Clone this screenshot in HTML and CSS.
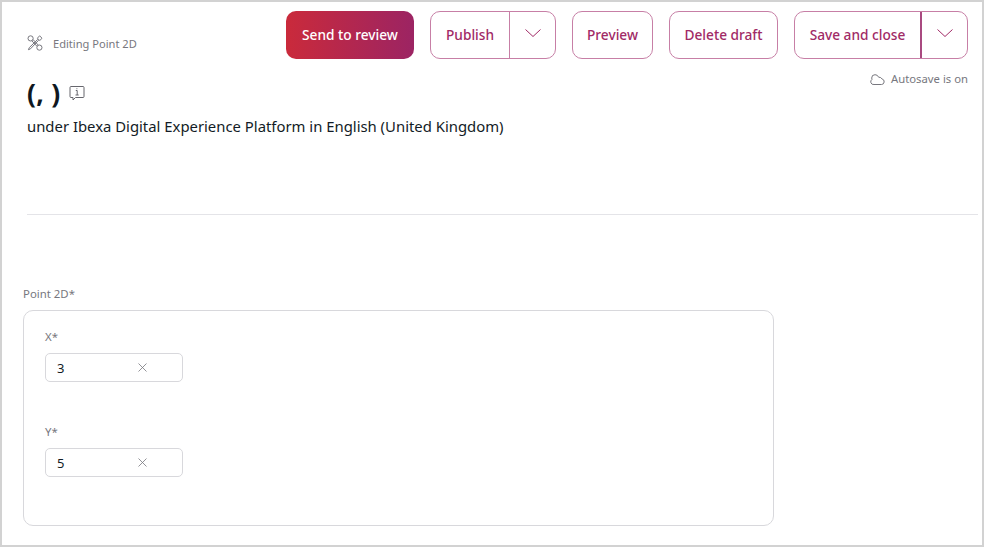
FILE: index.html
```html
<!DOCTYPE html>
<html lang="en">

<head>
    <meta charset="UTF-8">
    <title>Editing Point 2D</title>
    <link rel="stylesheet" href="styles.css">
</head>

<body>
<div class="frame">
    <div class="top-bar">
        <div class="editing">
            <svg class="tools-icon" viewBox="0 0 16 16" width="16" height="16" fill="none" stroke="#77777e" stroke-width="1">
                <circle cx="3.600" cy="3.400" r="2.600"/>
                <circle cx="12.400" cy="12.600" r="2.600"/>
                <path d="M6 4.500 11.200 10M4.800 5.800 10 11.300"/>
                <path d="M12.600 .8 15 3.200 12.800 5.600 10.400 3.200z"/>
                <path d="M10.800 4.300 2.400 12.500l-1 2.200 2 -.8L11.700 5.200"/>
            </svg>
            <span>Editing Point 2D</span>
        </div>
        <div class="actions">
            <button class="btn btn-primary">Send to review</button>
            <div class="btn-group publish">
                <button class="btn-main">Publish</button>
                <button class="btn-toggle">
                    <svg viewBox="0 0 16 8" width="16" height="8" fill="none" stroke="#a12a66" stroke-width="1"><path d="M.5.5 8 7.5 15.5.5"/></svg>
                </button>
            </div>
            <button class="btn btn-outline preview">Preview</button>
            <button class="btn btn-outline delete">Delete draft</button>
            <div class="btn-group save">
                <button class="btn-main">Save and close</button>
                <button class="btn-toggle strong">
                    <svg viewBox="0 0 16 8" width="16" height="8" fill="none" stroke="#a12a66" stroke-width="1"><path d="M.5.5 8 7.5 15.5.5"/></svg>
                </button>
            </div>
        </div>
    </div>

    <div class="autosave">
        <svg viewBox="0 0 15 11" width="15" height="11" fill="none" stroke="#77777e" stroke-width="1"><path d="M4 10.500h7.500a2.800 2.800 0 0 0 .6-5.500A3.600 3.600 0 0 0 8.600 3.200 3.800 3.800 0 0 0 5 .7a3.300 3.300 0 0 0-3.300 3.300c0 .5.100 1 .3 1.400A2.800 2.800 0 0 0 4 10.500z"/></svg>
        <span>Autosave is on</span>
    </div>

    <div class="title-block">
        <div class="title-row">
            <h1>(, )</h1>
            <svg class="info-icon" viewBox="0 0 16 16" width="16" height="16" fill="none" stroke="#66666d" stroke-width="1">
                <path d="M2 1.500h12a1 1 0 0 1 1 1v9a1 1 0 0 1-1 1H6.500L4 15v-2.500H2a1 1 0 0 1-1-1v-9a1 1 0 0 1 1-1z"/>
                <path d="M6.800 5.500h1.400V10M6.500 10h3.200M7.900 3.300v.9"/>
            </svg>
        </div>
        <p class="location">under Ibexa Digital Experience Platform in English (United Kingdom)</p>
    </div>

    <hr class="divider">

    <div class="field-label">Point 2D*</div>
    <div class="card">
        <div class="coord">
            <label>X*</label>
            <div class="input">
                <span>3</span>
                <svg viewBox="0 0 9 9" width="9" height="9" fill="none" stroke="#77777e" stroke-width="0.8"><path d="M.5.500l8 8M8.500.500l-8 8"/></svg>
            </div>
        </div>
        <div class="coord">
            <label>Y*</label>
            <div class="input">
                <span>5</span>
                <svg viewBox="0 0 9 9" width="9" height="9" fill="none" stroke="#77777e" stroke-width="0.8"><path d="M.5.500l8 8M8.500.500l-8 8"/></svg>
            </div>
        </div>
    </div>
</div>
</body>

</html>
```

FILE: styles.css
```css
* {
    box-sizing: border-box;
}

body {
    margin: 0;
    font-family: "Noto Sans", sans-serif;
    color: #131c26;
    background-color: #fff;
}

.frame {
    width: 984px;
    height: 547px;
    border: 2px solid #d2d2d2;
    overflow: hidden;
}

.top-bar {
    display: flex;
    justify-content: space-between;
    align-items: flex-start;
    padding: 9px 14px 0 25px;
}

.editing {
    display: flex;
    align-items: center;
    gap: 10px;
    margin-top: 24px;
    font-size: 11.1px;
    color: #77777e;
}

.actions {
    display: flex;
    gap: 16px;
}

button {
    font-family: inherit;
    font-size: 13.7px;
    font-weight: 500;
    cursor: pointer;
    background: none;
    border: none;
    color: #a12a66;
    padding: 0 0 2px;
}

.btn {
    height: 48px;
    border-radius: 10px;
}

.btn-primary {
    width: 128px;
    color: #fff;
    background-image: linear-gradient(90deg, #ca2a3b, #9c2463);
}

.btn-outline {
    border: 1px solid #c77fa6;
}

.preview {
    width: 81px;
}

.delete {
    width: 109px;
}

.btn-group {
    display: flex;
    height: 48px;
    border: 1px solid #c77fa6;
    border-radius: 10px;
}

.publish {
    width: 126px;
}

.save {
    width: 174px;
}

.btn-main {
    flex: 1;
}

.btn-toggle {
    width: 46px;
    display: flex;
    align-items: center;
    justify-content: center;
    border-left: 1px solid #c77fa6;
    padding-bottom: 4px;
}

.btn-toggle.strong {
    width: 47px;
    border-left: 2px solid #a94a80;
}

.autosave {
    display: flex;
    justify-content: flex-end;
    align-items: center;
    gap: 6px;
    padding-right: 14px;
    margin-top: 12px;
    font-size: 11.3px;
    line-height: 16px;
    color: #77777e;
}

.title-block {
    padding-left: 25px;
    margin-top: -10px;
}

.title-row {
    display: flex;
    align-items: center;
    gap: 9px;
}

h1 {
    margin: 0;
    font-size: 26.4px;
    line-height: 32px;
    font-weight: 700;
    letter-spacing: 0.3px;
    color: #0f1720;
}

.location {
    margin: 7px 0 0;
    font-size: 14.87px;
    line-height: 20px;
}

hr.divider {
    margin: 78px 4px 0 25px;
    border: none;
    border-top: 1px solid #e4e4e8;
}

.field-label {
    margin: 71px 0 0 21px;
    font-size: 11.4px;
    line-height: 16px;
    color: #77777e;
}

.card {
    width: 751px;
    height: 216px;
    margin: 8px 0 0 21px;
    padding: 18px 21px;
    border: 1px solid #d8d8dc;
    border-radius: 10px;
}

.coord {
    margin-bottom: 42px;
}

.coord label {
    display: block;
    font-size: 11.4px;
    line-height: 16px;
    color: #77777e;
    margin-bottom: 8px;
}

.input {
    width: 138px;
    height: 29px;
    display: flex;
    align-items: center;
    justify-content: space-between;
    padding: 0 35px 0 11px;
    border: 1px solid #d8d8dc;
    border-radius: 5px;
    font-size: 13px;
}
```
